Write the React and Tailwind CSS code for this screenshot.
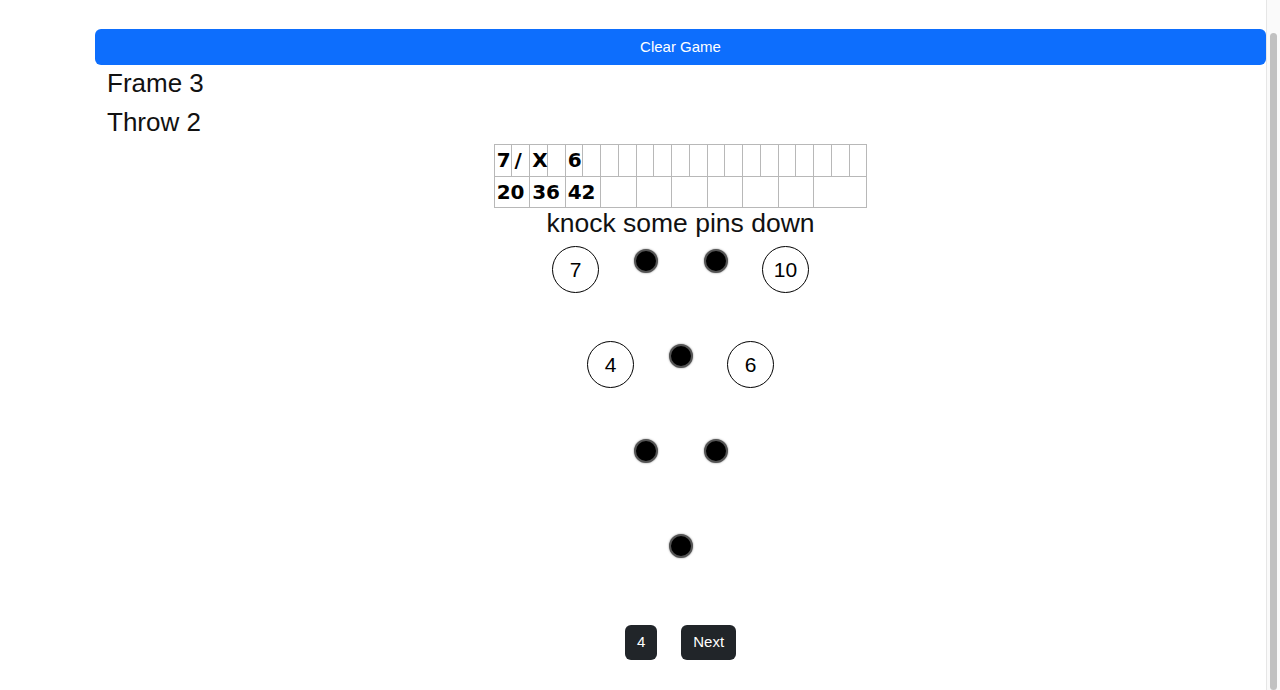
import React, { useLayoutEffect } from 'react';

const marks = ['7', '/', 'X', '', '6', ...Array(16).fill('')];
const totals = ['20', '36', '42', '', '', '', '', '', '', ''];

const pinRows = [
  [{ n: 7, up: true }, { n: 8 }, { n: 9 }, { n: 10, up: true }],
  [{ n: 4, up: true }, { n: 5 }, { n: 6, up: true }],
  [{ n: 2 }, { n: 3 }],
  [{ n: 1 }],
];

function Pin({ n, up }) {
  if (up) {
    return (
      <div className="w-[47px] h-[47px] rounded-full border border-black flex items-center justify-center text-[21px] text-black">
        {n}
      </div>
    );
  }
  return (
    <div className="w-[47px] h-[47px] flex justify-center pt-[3px]">
      <div className="w-6 h-6 rounded-full bg-black border-2 border-[#555] shadow-[0_0_2px_rgba(0,0,0,0.5)]" />
    </div>
  );
}

function ScoreCard() {
  return (
    <div className="grid grid-cols-[repeat(21,17.75px)] border-l border-t border-[#b8b8b8] font-['DejaVu_Sans',sans-serif] font-bold text-[20px] text-black">
      {marks.map((m, i) => (
        <div key={'m' + i} className="h-[31.5px] leading-[30.5px] pl-[2px] border-r border-b border-[#b8b8b8] whitespace-nowrap">
          {m}
        </div>
      ))}
      {totals.map((t, i) => (
        <div key={'t' + i} className={`h-[31.5px] leading-[30.5px] pl-[2px] border-r border-b border-[#b8b8b8] whitespace-nowrap ${i === 9 ? 'col-span-3' : 'col-span-2'}`}>
          {t}
        </div>
      ))}
    </div>
  );
}

export default function App() {
  useLayoutEffect(() => {
    window.scrollTo(0, document.documentElement.scrollHeight);
  }, []);

  return (
    <div className="bg-white text-[#111] font-['Liberation_Sans',Arial,sans-serif] pt-[64px] pb-[30px] pl-[95px] pr-[14px]">
      <button className="w-full h-9 rounded-md bg-[#0d6efd] text-white text-[15px]">Clear Game</button>
      <div className="pl-3 text-[26px] leading-[36px] mb-[3px]">Frame 3</div>
      <div className="pl-3 text-[26px] leading-[36px]">Throw 2</div>

      <div className="flex justify-center mt-1">
        <ScoreCard />
      </div>

      <div className="text-center text-[26.5px] leading-[31px]">knock some pins down</div>

      <div className="flex flex-col gap-[48px] mt-[7px]">
        {pinRows.map((row, r) => (
          <div key={r} className="flex justify-center gap-[23px] h-[47px]">
            {row.map((p) => (
              <Pin key={p.n} n={p.n} up={p.up} />
            ))}
          </div>
        ))}
      </div>

      <div className="flex justify-center gap-6 mt-[47px]">
        <button className="h-[35px] px-3 rounded-md bg-[#212529] text-white text-[15px]">4</button>
        <button className="h-[35px] px-3 rounded-md bg-[#212529] text-white text-[15px]">Next</button>
      </div>

      {/* browser scrollbar, scrolled to the bottom */}
      <div className="fixed top-0 right-0 h-screen w-[14px] bg-[#fafafa] border-l border-[#e6e6e6] pt-[33px] px-[3px]">
        <div className="h-full w-full rounded-full bg-[#c1c1c1]" />
      </div>
    </div>
  );
}
